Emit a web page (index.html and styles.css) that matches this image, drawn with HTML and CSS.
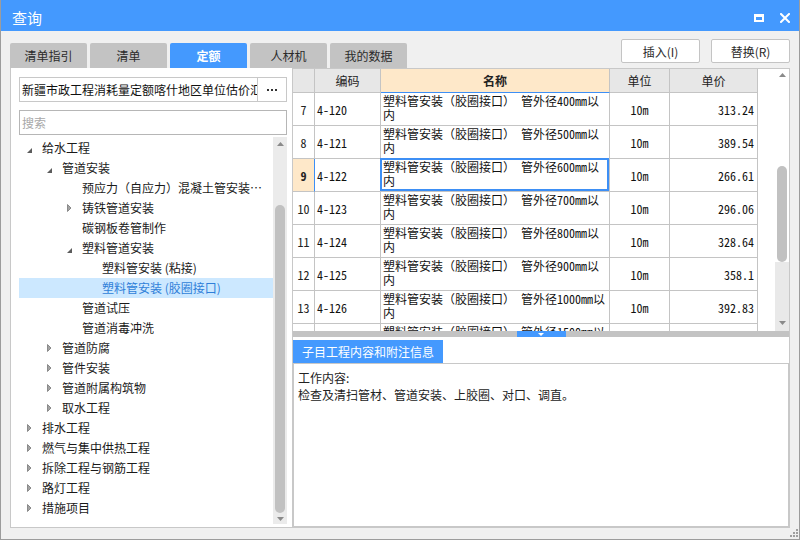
FILE: index.html
```html
<!DOCTYPE html>
<html lang="zh-CN">
<head>
<meta charset="utf-8">
<title>查询</title>
<link rel="stylesheet" href="styles.css">
</head>
<body>
<div class="window">
  <div class="titlebar">
    <span class="title">查询</span>
    <div class="win-ctrls">
      <svg width="10" height="8" viewBox="0 0 10 8"><path d="M0 0H10V8H0Z M2 3V6H8V3Z" fill="#fff" fill-rule="evenodd"/></svg>
      <svg width="10" height="10" viewBox="0 0 10 10"><path d="M1 1L9 9M9 1L1 9" stroke="#fff" stroke-width="2" stroke-linecap="square"/></svg>
    </div>
  </div>

  <div class="toolbar">
    <div class="tabs">
      <div class="tab">清单指引</div>
      <div class="tab">清单</div>
      <div class="tab active">定额</div>
      <div class="tab">人材机</div>
      <div class="tab">我的数据</div>
    </div>
    <div class="actions">
      <div class="btn">插入(I)</div>
      <div class="btn">替换(R)</div>
    </div>
  </div>

  <div class="main">
    <div class="left">
      <div class="combo">
        <div class="combo-text">新疆市政工程消耗量定额喀什地区单位估价汇总表</div>
        <div class="combo-btn"><svg width="10" height="2" viewBox="0 0 10 2"><rect x="0" y="0" width="2" height="2" fill="#333"/><rect x="4" y="0" width="2" height="2" fill="#333"/><rect x="8" y="0" width="2" height="2" fill="#333"/></svg></div>
      </div>
      <input class="search" type="text" placeholder="搜索">
      <div class="tree">
        <div class="tree-list">
          <div class="node lv0"><span class="tg"><svg class="open" width="5" height="5" viewBox="0 0 5 5"><path d="M5 0V5H0Z" fill="#5c5c5c"/></svg></span><span class="lbl">给水工程</span></div>
          <div class="node lv1"><span class="tg"><svg class="open" width="5" height="5" viewBox="0 0 5 5"><path d="M5 0V5H0Z" fill="#5c5c5c"/></svg></span><span class="lbl">管道安装</span></div>
          <div class="node lv2"><span class="tg"></span><span class="lbl">预应力（自应力）混凝土管安装(胶圈接口)</span></div>
          <div class="node lv2"><span class="tg"><svg width="5" height="8" viewBox="0 0 5 8"><path d="M0.5 0.5L4 4L0.5 7.5Z" fill="#a3a3a3" stroke="#8a8a8a" stroke-width="1"/></svg></span><span class="lbl">铸铁管道安装</span></div>
          <div class="node lv2"><span class="tg"></span><span class="lbl">碳钢板卷管制作</span></div>
          <div class="node lv2"><span class="tg"><svg class="open" width="5" height="5" viewBox="0 0 5 5"><path d="M5 0V5H0Z" fill="#5c5c5c"/></svg></span><span class="lbl">塑料管道安装</span></div>
          <div class="node lv3"><span class="tg"></span><span class="lbl">塑料管安装 (粘接)</span></div>
          <div class="node lv3 sel"><span class="tg"></span><span class="lbl">塑料管安装 (胶圈接口)</span></div>
          <div class="node lv2"><span class="tg"></span><span class="lbl">管道试压</span></div>
          <div class="node lv2"><span class="tg"></span><span class="lbl">管道消毒冲洗</span></div>
          <div class="node lv1"><span class="tg"><svg width="5" height="8" viewBox="0 0 5 8"><path d="M0.5 0.5L4 4L0.5 7.5Z" fill="#a3a3a3" stroke="#8a8a8a" stroke-width="1"/></svg></span><span class="lbl">管道防腐</span></div>
          <div class="node lv1"><span class="tg"><svg width="5" height="8" viewBox="0 0 5 8"><path d="M0.5 0.5L4 4L0.5 7.5Z" fill="#a3a3a3" stroke="#8a8a8a" stroke-width="1"/></svg></span><span class="lbl">管件安装</span></div>
          <div class="node lv1"><span class="tg"><svg width="5" height="8" viewBox="0 0 5 8"><path d="M0.5 0.5L4 4L0.5 7.5Z" fill="#a3a3a3" stroke="#8a8a8a" stroke-width="1"/></svg></span><span class="lbl">管道附属构筑物</span></div>
          <div class="node lv1"><span class="tg"><svg width="5" height="8" viewBox="0 0 5 8"><path d="M0.5 0.5L4 4L0.5 7.5Z" fill="#a3a3a3" stroke="#8a8a8a" stroke-width="1"/></svg></span><span class="lbl">取水工程</span></div>
          <div class="node lv0"><span class="tg"><svg width="5" height="8" viewBox="0 0 5 8"><path d="M0.5 0.5L4 4L0.5 7.5Z" fill="#a3a3a3" stroke="#8a8a8a" stroke-width="1"/></svg></span><span class="lbl">排水工程</span></div>
          <div class="node lv0"><span class="tg"><svg width="5" height="8" viewBox="0 0 5 8"><path d="M0.5 0.5L4 4L0.5 7.5Z" fill="#a3a3a3" stroke="#8a8a8a" stroke-width="1"/></svg></span><span class="lbl">燃气与集中供热工程</span></div>
          <div class="node lv0"><span class="tg"><svg width="5" height="8" viewBox="0 0 5 8"><path d="M0.5 0.5L4 4L0.5 7.5Z" fill="#a3a3a3" stroke="#8a8a8a" stroke-width="1"/></svg></span><span class="lbl">拆除工程与钢筋工程</span></div>
          <div class="node lv0"><span class="tg"><svg width="5" height="8" viewBox="0 0 5 8"><path d="M0.5 0.5L4 4L0.5 7.5Z" fill="#a3a3a3" stroke="#8a8a8a" stroke-width="1"/></svg></span><span class="lbl">路灯工程</span></div>
          <div class="node lv0"><span class="tg"><svg width="5" height="8" viewBox="0 0 5 8"><path d="M0.5 0.5L4 4L0.5 7.5Z" fill="#a3a3a3" stroke="#8a8a8a" stroke-width="1"/></svg></span><span class="lbl">措施项目</span></div>
        </div>
        <div class="tscroll">
          <div class="ts-up"><svg width="7" height="4" viewBox="0 0 7 4"><path d="M0 4L3.5 0L7 4Z" fill="#8a8a8a"/></svg></div>
          <div class="ts-space"></div>
          <div class="ts-thumb"></div>
          <div class="ts-down"><svg width="7" height="4" viewBox="0 0 7 4"><path d="M0 0L3.5 4L7 0Z" fill="#8a8a8a"/></svg></div>
        </div>
      </div>
    </div>

    <div class="right">
      <div class="grid-area">
        <div class="grid-wrap">
          <div class="grid">
            <div class="c hc"></div>
            <div class="c hc">编码</div>
            <div class="c hc hname">名称</div>
            <div class="c hc">单位</div>
            <div class="c hc">单价</div>

            <div class="c num">7</div><div class="c code">4-120</div><div class="c nm">塑料管安装（胶圈接口） 管外径400mm以内</div><div class="c unit">10m</div><div class="c price">313.24</div>
            <div class="c num">8</div><div class="c code">4-121</div><div class="c nm">塑料管安装（胶圈接口） 管外径500mm以内</div><div class="c unit">10m</div><div class="c price">389.54</div>
            <div class="c num rsel">9</div><div class="c code">4-122</div><div class="c nm csel">塑料管安装（胶圈接口） 管外径600mm以内</div><div class="c unit">10m</div><div class="c price">266.61</div>
            <div class="c num">10</div><div class="c code">4-123</div><div class="c nm">塑料管安装（胶圈接口） 管外径700mm以内</div><div class="c unit">10m</div><div class="c price">296.06</div>
            <div class="c num">11</div><div class="c code">4-124</div><div class="c nm">塑料管安装（胶圈接口） 管外径800mm以内</div><div class="c unit">10m</div><div class="c price">328.64</div>
            <div class="c num">12</div><div class="c code">4-125</div><div class="c nm">塑料管安装（胶圈接口） 管外径900mm以内</div><div class="c unit">10m</div><div class="c price">358.1</div>
            <div class="c num">13</div><div class="c code">4-126</div><div class="c nm">塑料管安装（胶圈接口） 管外径1000mm以内</div><div class="c unit">10m</div><div class="c price">392.83</div>
            <div class="c part"></div><div class="c part"></div><div class="c nm part">塑料管安装（胶圈接口） 管外径1500mm以内</div><div class="c part"></div><div class="c part"></div>
          </div>
        </div>
        <div class="vscroll">
          <div class="vs-up"><svg width="7" height="4" viewBox="0 0 7 4"><path d="M0 4L3.5 0L7 4Z" fill="#8a8a8a"/></svg></div>
          <div class="vs-space"></div>
          <div class="vs-thumb"></div>
          <div class="vs-rest"><svg width="7" height="4" viewBox="0 0 7 4"><path d="M0 0L3.5 4L7 0Z" fill="#8a8a8a"/></svg></div>
        </div>
      </div>
      <div class="splitter">
        <div class="sp-handle"><svg width="6" height="3" viewBox="0 0 6 3"><path d="M0 0L3 3L6 0Z" fill="#fff"/></svg></div>
      </div>
      <div class="bottom">
        <div class="btab">子目工程内容和附注信息</div>
        <div class="bcontent">
          <div>工作内容:</div>
          <div>检查及清扫管材、管道安装、上胶圈、对口、调直。</div>
        </div>
      </div>
    </div>
  </div>

  <div class="footer">
    <svg width="9" height="9" viewBox="0 0 9 9"><g fill="#a0a0a0"><rect x="7" y="1" width="2" height="2"/><rect x="4" y="4" width="2" height="2"/><rect x="7" y="4" width="2" height="2"/><rect x="1" y="7" width="2" height="2"/><rect x="4" y="7" width="2" height="2"/><rect x="7" y="7" width="2" height="2"/></g></svg>
  </div>
</div>
</body>
</html>
```

FILE: styles.css
```css
* { box-sizing: border-box; }
html, body { margin: 0; padding: 0; }
body {
  width: 800px;
  height: 540px;
  overflow: hidden;
  font-family: "Noto Sans CJK SC", "Microsoft YaHei", sans-serif;
  font-size: 12px;
  color: #1e1e1e;
  background: #f0f0f0;
}

.window {
  width: 800px;
  height: 540px;
  border: 1px solid #9c9c9c;
  border-top: 0;
  display: flex;
  flex-direction: column;
  background: #f0f0f0;
}

/* title bar */
.titlebar {
  height: 31px;
  flex: none;
  background: #4499fe;
  color: #fff;
  display: flex;
  align-items: center;
  padding: 4px 9px 0 11px;
}
.title { flex: 1; font-size: 15px; line-height: 20px; }
.win-ctrls { display: flex; align-items: center; gap: 16px; }

/* toolbar: tabs + buttons */
.toolbar {
  height: 37px;
  flex: none;
  display: flex;
  padding: 0 9px;
}
.tabs { display: flex; gap: 3px; align-self: flex-end; }
.tab {
  width: 77px;
  height: 25px;
  background: #c3c3c3;
  border-radius: 2px 2px 0 0;
  display: flex;
  align-items: center;
  justify-content: center;
  color: #2b2b2b;
}
.tab.active { background: #4499fe; color: #fff; font-weight: bold; }
.actions {
  margin-left: auto;
  margin-top: 8px;
  align-self: flex-start;
  display: flex;
  gap: 11px;
}
.btn {
  width: 79px;
  height: 24px;
  border: 1px solid #c4c4c4;
  border-radius: 2px;
  background: #fff;
  display: flex;
  align-items: center;
  justify-content: center;
  color: #2b2b2b;
}

/* main area */
.main {
  flex: 1;
  min-height: 0;
  display: flex;
  padding: 0 9px;
}

/* left panel */
.left {
  width: 282px;
  flex: none;
  background: #fff;
  border-left: 1px solid #c8c8c8;
  border-bottom: 1px solid #c8c8c8;
  padding: 9px 5px 3px 8px;
  display: flex;
  flex-direction: column;
}
.combo {
  height: 25px;
  flex: none;
  border: 1px solid #c8c8c8;
  display: flex;
}
.combo-text {
  flex: 1;
  min-width: 0;
  padding-left: 2px;
  line-height: 23px;
  white-space: nowrap;
  overflow: hidden;
  color: #111;
}
.combo-btn {
  width: 29px;
  flex: none;
  border-left: 1px solid #c8c8c8;
  display: flex;
  align-items: center;
  justify-content: center;
}
.search {
  margin: 8px 0 0 0;
  height: 25px;
  flex: none;
  width: 100%;
  border: 1px solid #b6b6b6;
  padding: 0 2px;
  font-family: "Noto Sans CJK SC", sans-serif;
  font-size: 12px;
  color: #222;
  background: #fff;
  outline: none;
}
.search::placeholder { color: #a8a8a8; }

.tree {
  flex: 1;
  min-height: 0;
  margin-top: 2px;
  display: flex;
}
.tree-list {
  flex: 1;
  min-width: 0;
  overflow: hidden;
  padding-top: 1px;
}
.node {
  height: 20px;
  display: flex;
  align-items: center;
  padding-right: 8px;
  white-space: nowrap;
  color: #1a1a1a;
}
.lv0 { padding-left: 8px; }
.lv1 { padding-left: 28px; }
.lv2 { padding-left: 48px; }
.lv3 { padding-left: 68px; }
.tg {
  width: 15px;
  height: 20px;
  flex: none;
  display: flex;
  align-items: center;
}
.tg .open { margin-top: 5px; }
.lbl {
  min-width: 0;
  overflow: hidden;
  text-overflow: ellipsis;
  line-height: 20px;
}
.node.sel { background: #cce8ff; color: #2f7fd9; }

.tscroll {
  width: 14px;
  flex: none;
  background: #ebebeb;
  display: flex;
  flex-direction: column;
  align-items: center;
}
.ts-up { height: 13px; display: flex; align-items: center; justify-content: center; }
.ts-space { height: 55px; }
.ts-thumb { width: 10px; height: 308px; background: #c1c1c1; border-radius: 5px; }
.ts-down { flex: 1; display: flex; align-items: center; justify-content: center; }

/* right panel */
.right {
  flex: 1;
  min-width: 0;
  border: 1px solid #c8c8c8;
  background: #fff;
  display: flex;
  flex-direction: column;
}
.grid-area {
  height: 262px;
  flex: none;
  display: flex;
  overflow: hidden;
}
.grid-wrap { flex: 1; min-width: 0; overflow: hidden; }
.grid {
  display: grid;
  grid-template-columns: 22px 66px 229px 60px 88px;
  grid-template-rows: 24px repeat(7, 33px) 7px;
  font-family: "Noto Sans Mono CJK SC", "Noto Sans CJK SC", monospace;
  font-size: 12px;
  color: #111;
}
.c {
  border-right: 1px solid #c4c4c4;
  border-bottom: 1px solid #c4c4c4;
  display: flex;
  align-items: center;
  overflow: hidden;
  position: relative;
}
.c.part { border-bottom: 0; }
.hc {
  background: #e7e7e7;
  justify-content: center;
  font-family: "Noto Sans CJK SC", sans-serif;
  color: #222;
}
.hname { background: #fee8c9; font-weight: bold; border-bottom-color: #3d8ff5; }
.num { justify-content: center; color: #222; }
.rsel { background: #fee8c9; font-weight: bold; border-right-color: #3d8ff5; }
.code { padding-left: 2px; }
.nm {
  display: block;
  padding: 1px 1px 0 2px;
  line-height: 14px;
}
.unit { justify-content: center; }
.price { justify-content: flex-end; padding-right: 3px; }
.csel { overflow: visible; }
.csel::after {
  content: "";
  position: absolute;
  top: -1px;
  left: -1px;
  right: 0;
  bottom: 0;
  border: 2px solid #3d8ff5;
}

.vscroll {
  width: 14px;
  flex: none;
  display: flex;
  flex-direction: column;
  align-items: center;
}
.vs-up { height: 12px; display: flex; align-items: center; justify-content: center; }
.vs-space { height: 85px; }
.vs-thumb { width: 10px; height: 96px; background: #c1c1c1; border-radius: 5px; flex: none; }
.vs-rest {
  flex: 1;
  align-self: stretch;
  background: #e9e9e9;
  display: flex;
  align-items: flex-end;
  justify-content: center;
  padding-bottom: 6px;
}

.splitter {
  height: 6px;
  flex: none;
  background: #c3c3c3;
  display: flex;
  justify-content: center;
}
.sp-handle {
  width: 49px;
  background: #4499fe;
  display: flex;
  align-items: center;
  justify-content: center;
}

.bottom {
  flex: 1;
  min-height: 0;
  background: #fff;
  padding-top: 3px;
  display: flex;
  flex-direction: column;
}
.btab {
  width: 150px;
  height: 23px;
  flex: none;
  background: #4499fe;
  color: #fff;
  display: flex;
  align-items: center;
  justify-content: center;
}
.bcontent {
  flex: 1;
  border: 1px solid #c8c8c8;
  padding: 5px 4px;
  line-height: 17px;
  color: #222;
}

.footer {
  height: 11px;
  flex: none;
  display: flex;
  justify-content: flex-end;
  align-items: flex-start;
  padding-right: 1px;
}
```
